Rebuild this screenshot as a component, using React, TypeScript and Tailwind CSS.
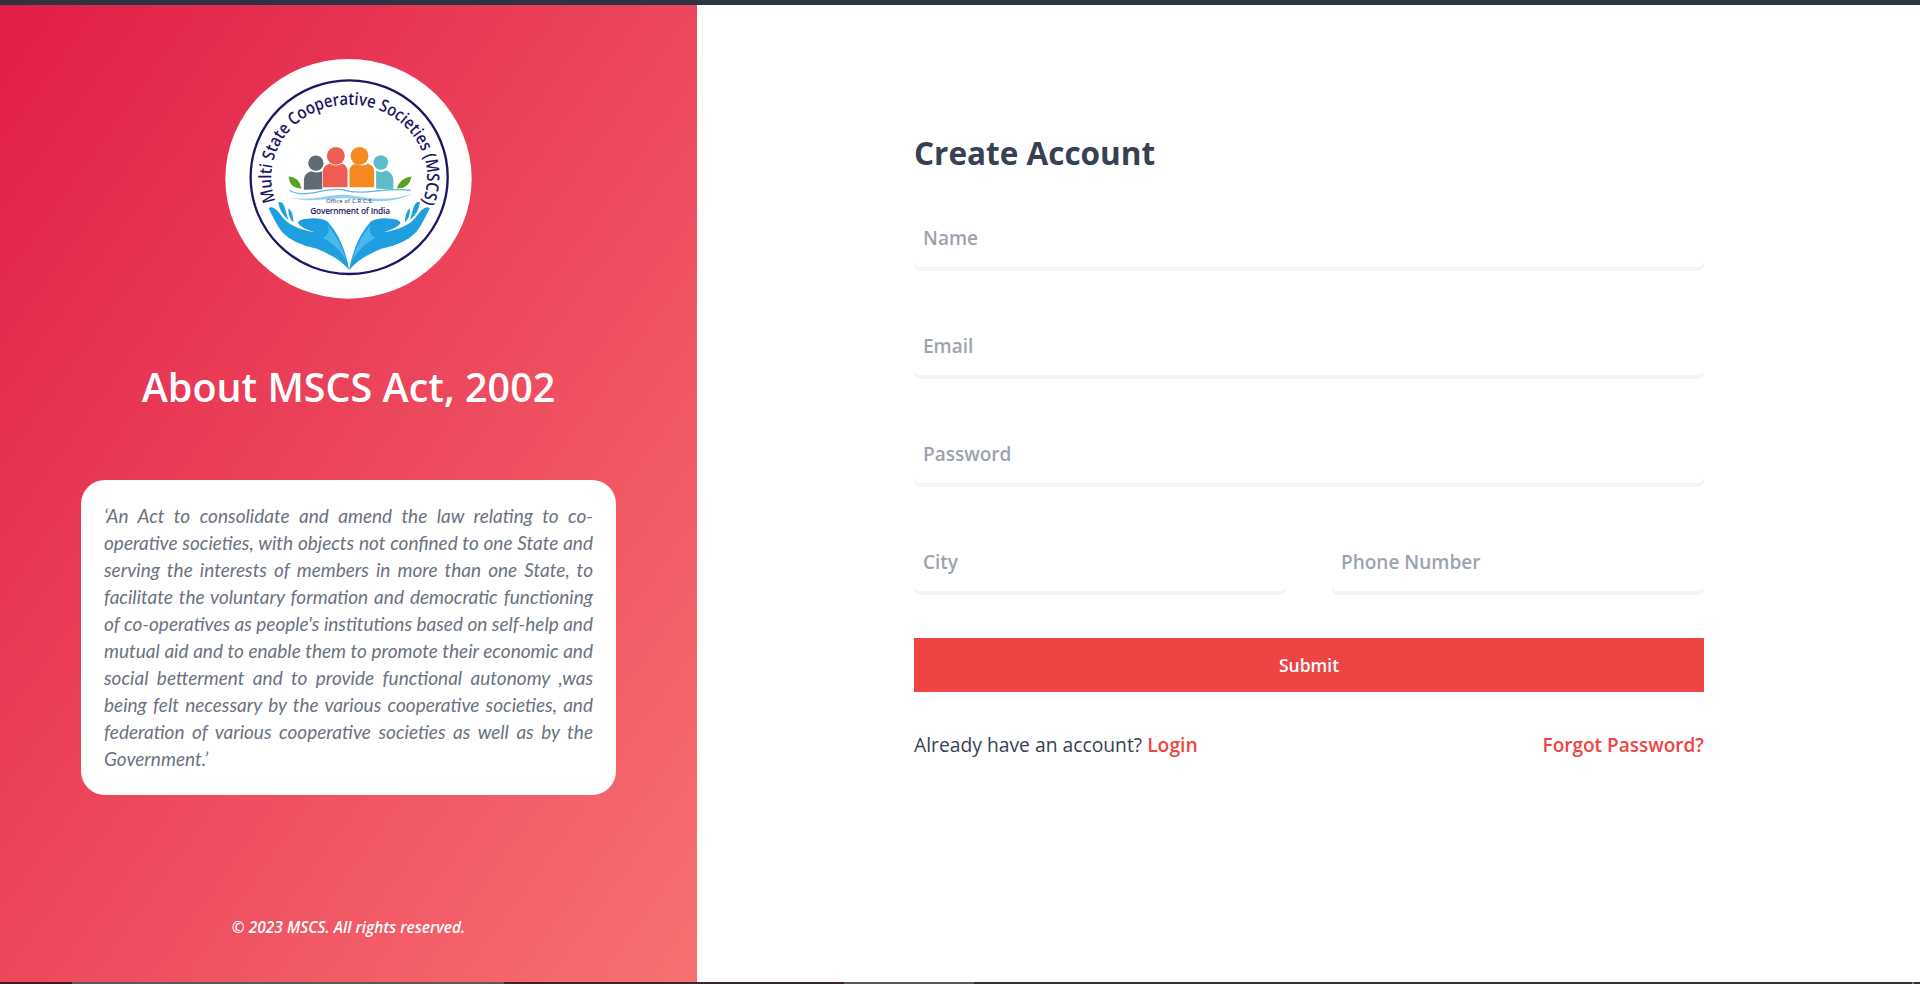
const field =
  "w-full h-[61px] rounded-md bg-white px-[9px] pt-[3px] text-[19px] font-semibold text-gray-700 shadow-[0_4px_0_#f3f4f6] outline-none placeholder:text-[#9ca3af]";

function Logo() {
  const ink = "#1d1763";
  return (
    <svg viewBox="75 57 740 721" className="h-[240px] w-[247px]">
      <ellipse cx="445" cy="417" rx="370" ry="360" fill="#fff" />
      <ellipse cx="447" cy="412" rx="296" ry="291" fill="none" stroke={ink} strokeWidth="7" />
      <defs>
        <path id="ring-text" d="M 226 484 A 234 218 0 1 1 668 484" />
        <g id="hand">
          <path d="M 205 505 Q 220 494 245 530 Q 270 565 345 578 Q 300 565 293 550 Q 296 538 320 537 Q 358 532 382 545 Q 432 600 447 692 Q 420 655 350 627 Q 280 614 245 577 Q 225 548 205 505 Z" fill="#1f9fe0" />
          <path d="M 380 552 Q 420 600 440 665 Q 410 615 368 595 Q 395 580 380 552 Z" fill="#49b8ec" />
          <path d="M 234 488 Q 246 482 254 504 L 264 540 Q 240 522 234 488 Z" fill="#1f9fe0" />
          <path d="M 264 506 Q 278 512 280 548 Q 264 534 264 506 Z" fill="#1f9fe0" />
        </g>
      </defs>
      <text fill={ink} fontFamily="Open Sans, sans-serif" fontSize="52" fontWeight="600">
        <textPath href="#ring-text" textLength="862" lengthAdjust="spacingAndGlyphs">
          Multi State Cooperative Societies (MSCS)
        </textPath>
      </text>

      {/* people */}
      <circle cx="347" cy="370" r="23" fill="#5f6b73" />
      <path d="M 311 450 V 418 Q 313 398 334 394 Q 350 402 366 394 V 448 Z" fill="#5f6b73" />
      <circle cx="542" cy="368" r="22" fill="#5cbcc9" />
      <path d="M 528 392 Q 542 402 556 392 Q 578 398 580 420 V 450 L 528 446 Z" fill="#5cbcc9" />
      <circle cx="407" cy="348" r="27" fill="#ee5d51" />
      <path d="M 368 442 V 392 Q 372 376 388 372 Q 407 382 426 372 Q 440 376 442 392 V 442 Z" fill="#ee5d51" />
      <circle cx="478" cy="348" r="27" fill="#f58b20" />
      <path d="M 448 442 V 392 Q 450 376 466 372 Q 485 382 504 372 Q 520 376 522 392 V 442 Z" fill="#f58b20" />

      {/* leaves */}
      <path d="M 265 410 Q 298 412 304 446 Q 268 446 265 410 Z" fill="#56a51e" />
      <path d="M 634 410 Q 600 414 590 446 Q 628 446 634 410 Z" fill="#56a51e" />

      {/* water */}
      <path d="M 268 452 C 320 480 370 440 430 450 C 490 470 560 440 632 452" fill="none" stroke="#5fb7e0" strokeWidth="4" />
      <path d="M 268 472 C 340 488 390 458 447 466 C 510 476 570 486 636 462 C 570 496 500 482 447 476 C 390 472 330 492 268 472 Z" fill="#8fd0ef" />

      <text x="449" y="489" textAnchor="middle" textLength="142" fill={ink} fontFamily="Open Sans, sans-serif" fontSize="17" fontWeight="500">
        Office of C.R.C.S.
      </text>
      <text x="450" y="522" textAnchor="middle" textLength="240" fill={ink} fontFamily="Open Sans, sans-serif" fontSize="25" fontWeight="600">
        Government of India
      </text>

      {/* hands */}
      <use href="#hand" />
      <use href="#hand" transform="matrix(-1 0 0 1 894 0)" />
    </svg>
  );
}

export default function App() {
  return (
    <div className="flex h-[984px] flex-col overflow-hidden bg-white font-['Open_Sans',sans-serif]">
      <div className="h-[5px] shrink-0 bg-[#2d3343]" />

      <div className="flex min-h-0 flex-1">
        <aside className="flex w-[697px] shrink-0 flex-col items-center bg-linear-to-br/srgb from-[#e11d48] to-[#f87171] pt-[54px]">
          <Logo />
          <h1 className="mt-[63px] text-[39.5px] leading-[50px] font-semibold text-white">About MSCS Act, 2002</h1>
          <div className="mt-[68px] w-[535px] rounded-[24px] bg-white px-[23px] pt-[22px] pb-[23px]">
            <p className="text-justify text-[19px] leading-[27px] text-[#6b7280] italic font-['Lato',sans-serif]">
              ‘An Act to consolidate and amend the law relating to co-operative societies, with objects not confined to
              one State and serving the interests of members in more than one State, to facilitate the voluntary
              formation and democratic functioning of co-operatives as people's institutions based on self-help and
              mutual aid and to enable them to promote their economic and social betterment and to provide functional
              autonomy ,was being felt necessary by the various cooperative societies, and federation of various
              cooperative societies as well as by the Government.’
            </p>
          </div>
          <p className="mt-[122px] text-[15.5px] leading-5 font-semibold text-white italic">© 2023 MSCS. All rights reserved.</p>
        </aside>

        <main className="flex-1 pt-[128px] pl-[217px]">
          <form className="w-[790px]">
            <h2 className="text-[31.5px] leading-[40px] font-bold text-[#374151]">Create Account</h2>
            <div className="mt-[33px] flex flex-col gap-[47px]">
              <input className={field} placeholder="Name" />
              <input className={field} placeholder="Email" />
              <input className={field} placeholder="Password" />
              <div className="flex gap-[46px]">
                <input className={field} placeholder="City" />
                <input className={field} placeholder="Phone Number" />
              </div>
            </div>
            <button type="button" className="mt-[47px] h-[54px] w-full bg-[#ef4444] text-[17.5px] font-semibold text-white">
              Submit
            </button>
            <div className="mt-[40px] flex justify-between text-[19.3px] leading-[26px] text-[#374151]">
              <span>
                Already have an account? <a className="font-semibold text-[#ef4444]">Login</a>
              </span>
              <a className="text-[19px] font-semibold text-[#ef4444]">Forgot Password?</a>
            </div>
          </form>
        </main>
      </div>

      <div className="flex h-[2px] shrink-0 bg-[#333333]">
        <div className="w-[72px] bg-[#3b1c20]" />
        <div className="w-[432px] bg-[#5a5a5a]" />
        <div className="w-[340px] bg-[#36282a]" />
        <div className="w-[130px] bg-[#5a5a5a]" />
        <div className="ml-[938px] w-[2px] bg-[#777777]" />
      </div>
    </div>
  );
}
